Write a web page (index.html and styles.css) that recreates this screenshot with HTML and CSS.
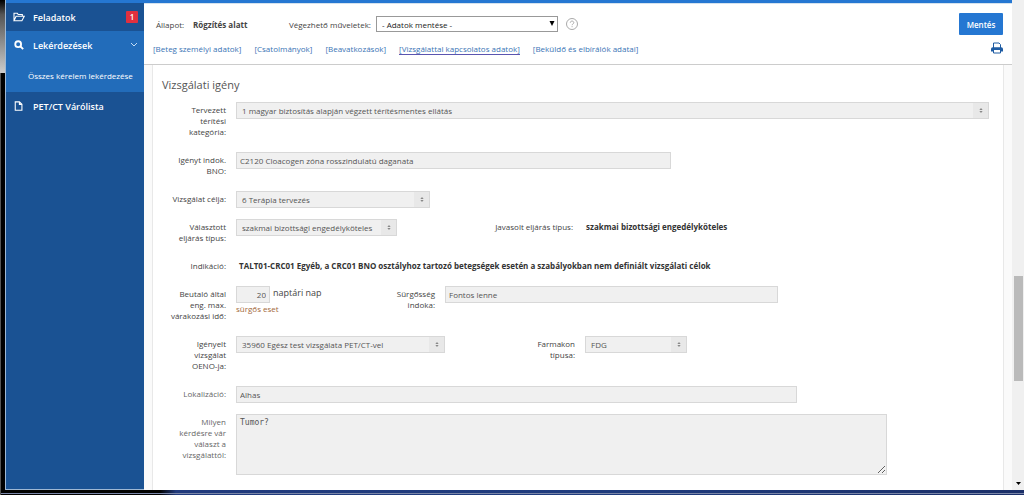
FILE: index.html
```html
<!DOCTYPE html>
<html lang="hu">
<head>
    <meta charset="UTF-8">
    <meta name="viewport" content="width=device-width, initial-scale=1.0">
    <title>Vizsgálati igény</title>
    <link rel="stylesheet" href="styles.css">
</head>
<body>

    <div class="window">

        <!-- Sidebar -->
        <nav class="sidebar">
            <a class="menu-item" href="#">
                <svg class="icon" viewBox="0 0 14 12"><path d="M1 10.500V1.500h4l1 1.500h5v2M1 10.500l2.500-5.500H13.300l-2.800 5.500z" /></svg>
                <span>Feladatok</span>
                <span class="badge">1</span>
            </a>
            <div class="menu-group">
                <a class="menu-item" href="#">
                    <svg class="icon search" viewBox="0 0 14 12"><circle cx="6" cy="5" r="3.500" /><path d="M8.500 7.500l3.500 3.500" /></svg>
                    <span>Lekérdezések</span>
                    <svg class="chevron" viewBox="0 0 8 6"><path d="M1 1l3 3 3-3" /></svg>
                </a>
                <a class="sub-item" href="#">Összes kérelem lekérdezése</a>
            </div>
            <a class="menu-item" href="#">
                <svg class="icon" viewBox="0 0 14 12"><path d="M2.500 1h5l3 3v7h-8zM7.500 1v3h3" /></svg>
                <span>PET/CT Várólista</span>
            </a>
        </nav>

        <main class="content">

            <!-- Status and section links -->
            <header class="header">
                <div class="status-row">
                    <span class="status-label">Állapot:</span>
                    <b class="status">Rögzítés alatt</b>
                    <label class="action-label" for="action">Végezhető műveletek:</label>
                    <span class="action-select">
                        <select id="action">
                            <option>- Adatok mentése -</option>
                        </select>
                        <svg viewBox="0 0 6 6"><path d="M0 0h6l-3 6z" /></svg>
                    </span>
                    <svg class="help" viewBox="0 0 12 12"><circle cx="6" cy="6" r="5.500" /><path d="M4.300 4.700c0-2.200 3.500-2.100 3.500 0 0 1.200-1.700 1.200-1.700 2.500M6.100 8.200v1" /></svg>
                    <button class="save-btn" type="button">Mentés</button>
                </div>
                <div class="tabs">
                    <a href="#">[Beteg személyi adatok]</a>
                    <a href="#">[Csatolmányok]</a>
                    <a href="#">[Beavatkozások]</a>
                    <a class="active" href="#">[Vizsgálattal kapcsolatos adatok]</a>
                    <a href="#">[Beküldő és elbírálók adatai]</a>
                    <a class="print" href="#" aria-label="Nyomtatás">
                        <svg viewBox="0 0 12 12"><path class="line" d="M2.500 6V1h5.500l1.500 1.500V6M2.500 8v3h7V8" /><path d="M0 7q0-1.800 1.800-1.800h8.400q1.800 0 1.800 1.800v2.500h-2V8H2v1.500H0z" /></svg>
                    </a>
                </div>
            </header>

            <form class="card">
                <h2>Vizsgálati igény</h2>

                <div class="row">
                    <label for="category">Tervezett<br>térítési<br>kategória:</label>
                    <span class="select w-full">
                        <select id="category" disabled><option>1 magyar biztosítás alapján végzett térítésmentes ellátás</option></select>
                        <svg viewBox="0 0 4 6"><path d="M0 2.500L2 0l2 2.500zM0 3.500L2 6l2-2.500z" /></svg>
                    </span>
                </div>

                <div class="row">
                    <label for="bno">Igényt indok.<br>BNO:</label>
                    <input class="w-bno" id="bno" type="text" value="C2120 Cloacogen zóna rosszindulatú daganata" readonly>
                </div>

                <div class="row">
                    <label for="goal">Vizsgálat célja:</label>
                    <span class="select w-goal">
                        <select id="goal" disabled><option>6 Terápia tervezés</option></select>
                        <svg viewBox="0 0 4 6"><path d="M0 2.500L2 0l2 2.500zM0 3.500L2 6l2-2.500z" /></svg>
                    </span>
                </div>

                <div class="row two-col-type">
                    <label for="procedure">Választott<br>eljárás típus:</label>
                    <span class="select w-procedure">
                        <select id="procedure" disabled><option>szakmai bizottsági engedélyköteles</option></select>
                        <svg viewBox="0 0 4 6"><path d="M0 2.500L2 0l2 2.500zM0 3.500L2 6l2-2.500z" /></svg>
                    </span>
                    <span class="label">Javasolt eljárás típus:</span>
                    <b class="value">szakmai bizottsági engedélyköteles</b>
                </div>

                <div class="row">
                    <span class="label">Indikáció:</span>
                    <b class="value">TALT01-CRC01 Egyéb, a CRC01 BNO osztályhoz tartozó betegségek esetén a szabályokban nem definiált vizsgálati célok</b>
                </div>

                <div class="row two-col-urgency">
                    <label for="days">Beutaló által<br>eng. max.<br>várakozási idő:</label>
                    <div class="days">
                        <input id="days" type="text" value="20" readonly>
                        <span class="unit">naptári nap</span>
                        <span class="hint">sürgős eset</span>
                    </div>
                    <label for="reason">Sürgősség<br>indoka:</label>
                    <input class="w-reason" id="reason" type="text" value="Fontos lenne" readonly>
                </div>

                <div class="row two-col-exam">
                    <label for="exam">Igényelt<br>vizsgálat<br>OENO-ja:</label>
                    <span class="select w-exam">
                        <select id="exam" disabled><option>35960 Egész test vizsgálata PET/CT-vel</option></select>
                        <svg viewBox="0 0 4 6"><path d="M0 2.500L2 0l2 2.500zM0 3.500L2 6l2-2.500z" /></svg>
                    </span>
                    <label for="pharmacon">Farmakon<br>típusa:</label>
                    <span class="select w-pharmacon">
                        <select id="pharmacon" disabled><option>FDG</option></select>
                        <svg viewBox="0 0 4 6"><path d="M0 2.500L2 0l2 2.500zM0 3.500L2 6l2-2.500z" /></svg>
                    </span>
                </div>

                <div class="row soft">
                    <label for="location">Lokalizáció:</label>
                    <input class="w-location" id="location" type="text" value="Alhas" readonly>
                </div>

                <div class="row soft">
                    <label for="question">Milyen<br>kérdésre vár<br>választ a<br>vizsgálattól:</label>
                    <textarea class="w-question" id="question" readonly>Tumor?</textarea>
                </div>
            </form>
        </main>

        <!-- Scrollbar -->
        <div class="scrollbar">
            <div class="track-before"></div>
            <div class="thumb"></div>
            <div class="track-after"></div>
            <svg viewBox="0 0 12 12"><path d="M4 4h5L6.500 7z" /></svg>
        </div>
    </div>

</body>
</html>
```

FILE: styles.css
```css
* {
    margin: 0;
    padding: 0;
    box-sizing: border-box;
    font-family: "Open Sans", "Noto Sans", sans-serif;
}

body {
    display: flex;
    height: 100vh;
    padding: 0 0 5px 5px;
    overflow: hidden;
    font-size: 8px;
    line-height: 11px;
    color: #444;
    background:
        linear-gradient(to bottom, #000, #555 20%, #ccc) left top / 5px 73px no-repeat,
        linear-gradient(#555, #555) left top / 1px 100% no-repeat,
        linear-gradient(#7a86a8, #7a86a8) left bottom 1px / 100% 1px no-repeat,
        linear-gradient(to right, #000 160px, #213a7c 176px, #1f3b7d 60%, #1b2f68) left bottom / 100% 5px no-repeat,
        #000;
}

a {
    color: inherit;
    text-decoration: none;
}

.window {
    display: flex;
    flex: 1;
    min-width: 0;
    background: #fff;
    border-left: 1px solid #9eb8d4;
}

/* Sidebar */
.sidebar {
    width: 138px;
    flex-shrink: 0;
    color: #fff;
    font-weight: 600;
    background: #1a5293;
    border-top: 3px solid #2577d2;
    border-bottom: 1px solid #9eb8d4;
}

.menu-item {
    display: flex;
    align-items: center;
    height: 28px;
    padding: 0 6px 0 7px;
    gap: 8px;
    font-size: 9px;
}

.menu-group {
    height: 61px;
    background: #226cba;
}

.icon {
    width: 12px;
    height: 10px;
    fill: none;
    stroke: #fff;
    stroke-width: 1.3;
}

.icon.search {
    stroke-width: 2.2;
}

.badge {
    width: 12px;
    height: 12px;
    margin-left: auto;
    font-size: 8px;
    line-height: 12px;
    text-align: center;
    background: #e0303f;
    border-radius: 1px;
}

.chevron {
    width: 8px;
    height: 6px;
    margin-left: auto;
    fill: none;
    stroke: #c3dcf5;
}

.sub-item {
    display: block;
    padding: 11px 0 0 22px;
    font-size: 8px;
    font-weight: normal;
}

/* Header */
.content {
    display: flex;
    flex-direction: column;
    flex: 1;
    min-width: 0;
    background: #fafafa;
    border-top: 3px solid #2577d2;
}

.header {
    height: 62px;
    flex-shrink: 0;
    padding: 9px 9px 0;
    background: #fff;
    border-top: 1px solid #d4e2ee;
    border-bottom: 1px solid #ccc;
}

.status-row {
    display: flex;
    align-items: center;
    height: 22px;
    padding-left: 3px;
}

.status-label {
    width: 37px;
}

.status {
    width: 96px;
}

.action-label {
    width: 87px;
}

.action-select {
    position: relative;
    width: 182px;
}

.action-select select {
    display: block;
    width: 100%;
    height: 16px;
    padding: 0 5px;
    font-size: 8px;
    color: #222;
    appearance: none;
    background: #fff;
    border: 1px solid #999;
}

.action-select svg {
    position: absolute;
    top: 5px;
    right: 3px;
    width: 6px;
    height: 5px;
    fill: #000;
}

.help {
    width: 12px;
    height: 12px;
    margin-left: 8px;
    fill: none;
    stroke: #aaa;
}

.save-btn {
    width: 44px;
    height: 22px;
    margin-left: auto;
    font-size: 8px;
    font-weight: 600;
    color: #fff;
    background: #2577d2;
    border: none;
    border-radius: 1px;
}

.tabs {
    display: flex;
    align-items: center;
    gap: 13px;
    height: 26px;
    color: #3a74b5;
}

.tabs .active {
    box-shadow: 0 1px 0 #5a55b0;
}

.print {
    height: 12px;
    margin-left: auto;
}

.print svg {
    width: 12px;
    height: 12px;
    fill: #1f5ca3;
}

.print .line {
    fill: none;
    stroke: #1f5ca3;
}

/* Form card */
.card {
    display: flex;
    flex-direction: column;
    flex: 1;
    gap: 11px;
    margin: 0 8px;
    padding: 14px 14px 0 9px;
    background: #fff;
    border: 1px solid #e8e8e8;
    border-width: 0 1px;
}

h2 {
    font-size: 11px;
    font-weight: normal;
    line-height: 12px;
    color: #555;
}

.row {
    display: grid;
    grid-template-columns: 64px 1fr;
    column-gap: 10px;
    align-items: start;
}

.two-col-type {
    grid-template-columns: 64px 161px 166px 1fr;
}

.two-col-urgency {
    grid-template-columns: 64px 113px 76px 1fr;
}

.two-col-exam {
    grid-template-columns: 64px 209px 120px 1fr;
}

.row label,
.label {
    padding: 2px 0 4px;
    text-align: right;
}

.value {
    padding: 2px 3px 4px;
    color: #333;
}

.soft {
    color: #666;
}

.row input,
.row select,
.row textarea {
    display: block;
    max-width: 100%;
    height: 17px;
    padding: 0 3px;
    font-size: 8px;
    color: #555;
    background: #f0f0f0;
    border: 1px solid #d8d8d8;
}

.select {
    position: relative;
}

.row select {
    width: 100%;
    padding: 0 18px 0 5px;
    opacity: 1;
    appearance: none;
    background: linear-gradient(#e8e8e8, #e8e8e8) right / 15px 100% no-repeat, #f0f0f0;
}

.select svg {
    position: absolute;
    top: 6px;
    right: 6px;
    width: 4px;
    height: 5px;
    fill: #888;
}

.w-full {
    width: 100%;
}

.w-bno {
    width: 435px;
}

.w-goal {
    width: 194px;
}

.w-procedure {
    width: 161px;
}

.w-reason {
    width: 333px;
}

.w-exam {
    width: 209px;
}

.w-pharmacon {
    width: 102px;
}

.w-location {
    width: 561px;
}

.row .w-question {
    width: 651px;
    height: 61px;
    padding: 3px;
    font-family: "DejaVu Sans Mono", monospace;
}

.days {
    display: grid;
    grid-template-columns: 34px 1fr;
    column-gap: 3px;
}

.days input {
    width: 34px;
    text-align: right;
}

.unit {
    font-size: 9px;
    line-height: 14px;
}

.hint {
    grid-column: span 2;
    color: #a3683a;
}

/* Scrollbar */
.scrollbar {
    display: flex;
    flex-direction: column;
    width: 12px;
    flex-shrink: 0;
    background: #f0f0f0;
}

.track-before {
    flex: 276;
}

.thumb {
    flex: 105;
    margin: 0 1px 0 2px;
    background: #bababa;
}

.track-after {
    flex: 97;
}

.scrollbar svg {
    width: 12px;
    height: 12px;
}
```
